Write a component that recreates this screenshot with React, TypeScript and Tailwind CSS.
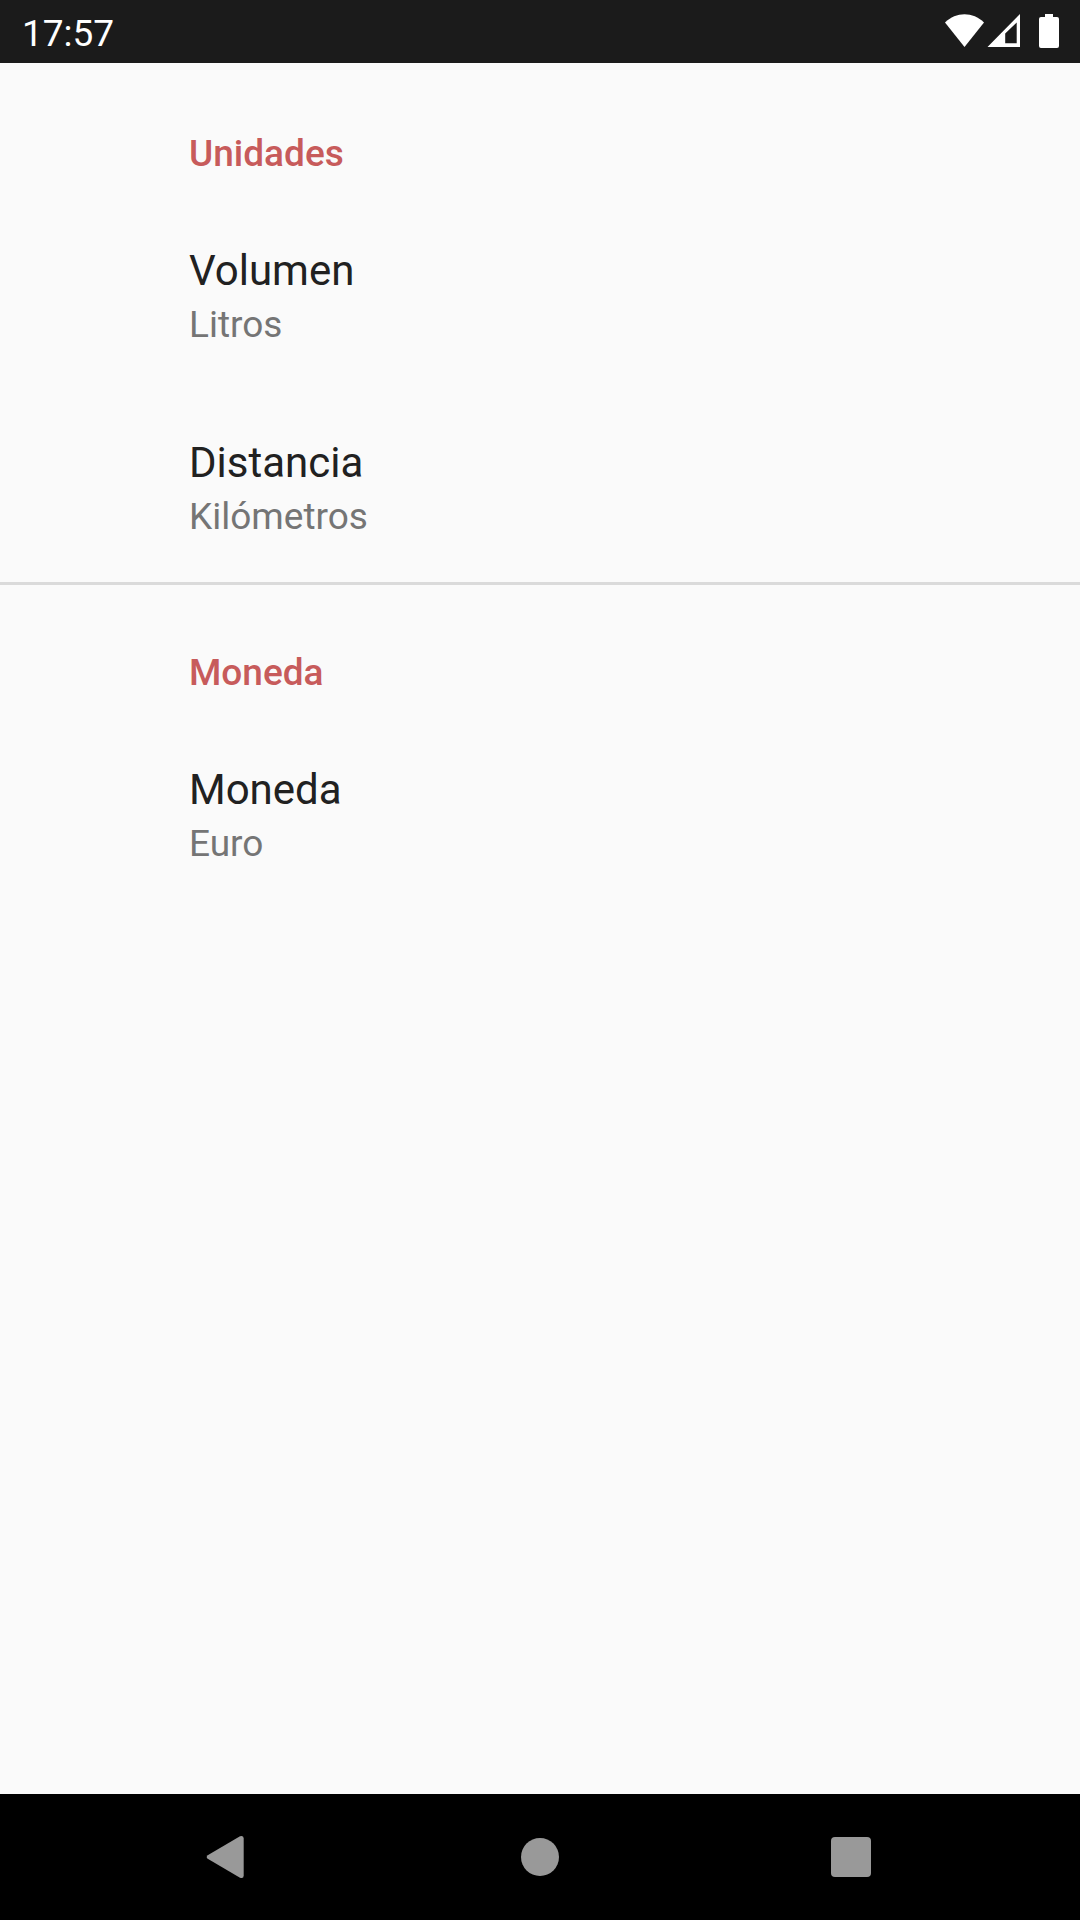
const SECTIONS = [
  {
    title: "Unidades",
    rows: [
      { label: "Volumen", value: "Litros" },
      { label: "Distancia", value: "Kilómetros" },
    ],
  },
  { title: "Moneda", rows: [{ label: "Moneda", value: "Euro" }] },
];

function StatusBar() {
  return (
    <header className="flex h-[63px] shrink-0 items-center justify-between bg-[#1b1b1b] pl-[22px] text-white">
      <span className="pt-[4px] text-[37px] leading-[44px]">17:57</span>
      <svg className="h-[63px] w-[150px]" viewBox="930 0 150 63" fill="currentColor">
        <path d="M945 22.500C956 11.500 973 11.500 984 22.500L964.500 47Z" />
        <path fillRule="evenodd" d="M1020 14V47H987.500ZM1016.700 22.500V43.300H1005.200V33.500Z" />
        <path d="M1045 14h8v3h4a2 2 0 0 1 2 2v27a2 2 0 0 1-2 2h-16a2 2 0 0 1-2-2V19a2 2 0 0 1 2-2h4z" />
      </svg>
    </header>
  );
}

function NavigationBar() {
  return (
    <nav className="flex h-[126px] shrink-0 items-center justify-center bg-black text-[#999]">
      <svg className="h-[126px] w-[1080px]" viewBox="0 1794 1080 126" fill="currentColor">
        <path d="M207.700 1855.200 240 1836.300q3.700-1.300 3.700 2.200v37q0 3.500-3.700 2.200l-32.300-18.900q-2-1.800 0-3.600Z" />
        <circle cx="540" cy="1857" r="19" />
        <rect x="831" y="1837" width="40" height="40" rx="4" />
      </svg>
    </nav>
  );
}

export default function App() {
  return (
    <div className="flex h-[1920px] w-[1080px] flex-col bg-[#fafafa] font-['Roboto',sans-serif]">
      <StatusBar />
      <main className="flex-1">
        {SECTIONS.map((section, i) => (
          <section
            key={section.title}
            className={`border-t-[3px] pt-[66px] ${i > 0 ? "border-[#dadada]" : "border-transparent"}`}
          >
            <h2 className="pl-[189px] text-[37px] leading-[44px] font-medium text-[#c75b5b]">
              {section.title}
            </h2>
            <div className="flex flex-col gap-[10px] pt-[32px]">
              {section.rows.map((row) => (
                <div key={row.label} className="h-[182px] pt-[38px] pl-[189px]">
                  <p className="text-[42px] leading-[50px] text-[#212121]">{row.label}</p>
                  <p className="mt-[7px] text-[37px] leading-[44px] text-[#757575]">{row.value}</p>
                </div>
              ))}
            </div>
          </section>
        ))}
      </main>
      <NavigationBar />
    </div>
  );
}
